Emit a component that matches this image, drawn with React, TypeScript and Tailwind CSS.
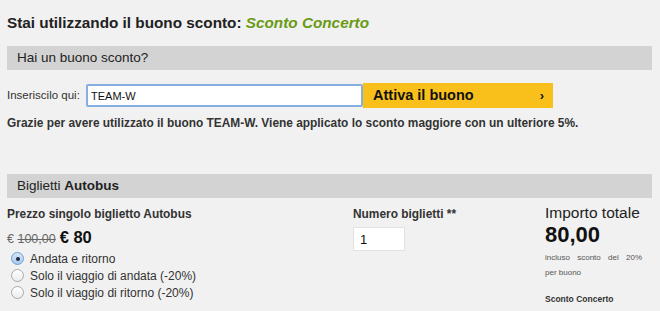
import { useState } from "react";

const Radio = ({ checked, label }: { checked?: boolean; label: string }) => (
  <label className="flex items-center h-[17px] text-[12px] text-[#333]">
    <span
      className={`w-[13px] h-[13px] rounded-full border flex items-center justify-center mr-[6px] ${
        checked
          ? "border-[#6d9ed8] bg-gradient-to-b from-[#d6e6f7] to-[#a9c9ee]"
          : "border-[#a9a9a9] bg-gradient-to-b from-white to-[#ececec]"
      }`}
    >
      {checked && <span className="w-[4px] h-[4px] rounded-full bg-[#1c2b3f]" />}
    </span>
    {label}
  </label>
);

export default function App() {
  const [code, setCode] = useState("TEAM-W");
  const [qty, setQty] = useState("1");

  return (
    <div className="w-[660px] h-[311px] overflow-hidden bg-[#f1f1f1] font-['Liberation_Sans',Arial,sans-serif] text-[#222]">
      <div className="pl-[7px] pr-[8px] pt-[13px]">
        <h1 className="text-[15.3px] font-bold leading-[20px]">
          Stai utilizzando il buono sconto:{" "}
          <span className="italic text-[#6a9a14]">Sconto Concerto</span>
        </h1>

        <div className="mt-[13px] h-[24px] bg-[#d3d3d3] pl-[10px] flex items-center text-[13.5px] text-[#222]">
          Hai un buono sconto?
        </div>

        <div className="mt-[13px] flex items-center text-[11.5px] text-[#333]">
          <span className="w-[79px]">Inseriscilo qui:</span>
          <input
            value={code}
            onChange={(e) => setCode(e.target.value)}
            className="w-[277px] h-[23px] bg-white border-2 border-[#86aee0] rounded-[2px] px-[3px] text-[11px] text-[#111] outline-none"
          />
          <button className="w-[190px] h-[25px] bg-[#f9c01b] flex items-center justify-between pl-[10px] pr-[9px] text-[14.5px] font-bold text-[#111]">
            Attiva il buono
            <span className="text-[13px] font-bold">›</span>
          </button>
        </div>

        <p className="mt-[8px] text-[11.9px] font-bold text-[#333] leading-[14px] whitespace-nowrap">
          Grazie per avere utilizzato il buono TEAM-W. Viene applicato lo sconto maggiore con un ulteriore 5%.
        </p>

        <div className="mt-[44px] h-[24px] bg-[#d3d3d3] pl-[10px] flex items-center text-[13.5px] text-[#222]">
          Biglietti&nbsp;<b>Autobus</b>
        </div>

        <div className="flex mt-[9px]">
          <div className="w-[346px]">
            <div className="text-[11.9px] font-bold text-[#333] leading-[14px]">
              Prezzo singolo biglietto Autobus
            </div>
            <div className="mt-[6px] flex items-baseline leading-[20px]">
              <span className="text-[12.5px] text-[#666]">
                € <span className="line-through">100,00</span>
              </span>
              <span className="ml-[4px] text-[16.5px] font-bold text-[#111]">€ 80</span>
            </div>
            <div className="pl-[4px] mt-[1px]">
              <Radio checked label="Andata e ritorno" />
              <Radio label="Solo il viaggio di andata (-20%)" />
              <Radio label="Solo il viaggio di ritorno (-20%)" />
            </div>
          </div>

          <div className="w-[192px]">
            <div className="text-[11.9px] font-bold text-[#333] leading-[14px]">Numero biglietti **</div>
            <input
              value={qty}
              onChange={(e) => setQty(e.target.value)}
              className="mt-[6px] w-[52px] h-[24px] bg-white border border-[#e2e2e2] px-[6px] text-[13px] text-[#111] outline-none"
            />
          </div>

          <div className="w-[97px] -mt-[4px]">
            <div className="text-[15.5px] text-[#222] leading-[19px] whitespace-nowrap">Importo totale</div>
            <div className="text-[22px] font-bold text-[#111] leading-[25px]">80,00</div>
            <div className="mt-[3px] text-[8px] text-[#555] leading-[15px] text-justify [text-align-last:justify]">
              incluso sconto del 20%
            </div>
            <div className="text-[8px] text-[#555] leading-[15px]">per buono</div>
            <div className="mt-[14px] text-[8.5px] font-bold text-[#333] leading-[11px]">Sconto Concerto</div>
          </div>
        </div>
      </div>
    </div>
  );
}
